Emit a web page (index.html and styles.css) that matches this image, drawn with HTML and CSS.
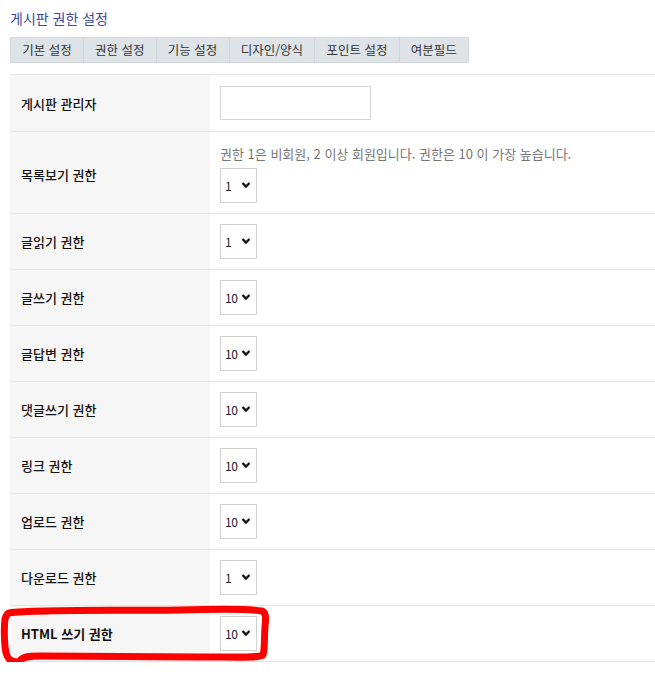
FILE: index.html
```html
<!DOCTYPE html>
<html lang="ko">
<head>
  <meta charset="UTF-8" />
  <meta name="viewport" content="width=device-width, initial-scale=1.0"/>
  <title>게시판 권한 설정</title>
  <link rel="stylesheet" href="styles.css">
</head>
<body>
  <div class="page">
    <h2 class="title">게시판 권한 설정</h2>

    <ul class="tabs">
      <li>기본 설정</li>
      <li>권한 설정</li>
      <li>기능 설정</li>
      <li>디자인/양식</li>
      <li>포인트 설정</li>
      <li>여분필드</li>
    </ul>

    <table class="frm-table">
      <tr class="row-short">
        <th>게시판 관리자</th>
        <td><input type="text" class="frm-input"></td>
      </tr>
      <tr class="row-help">
        <th>목록보기 권한</th>
        <td>
          <p class="help">권한 1은 비회원, 2 이상 회원입니다. 권한은 10 이 가장 높습니다.</p>
          <span class="sel"><select><option>1</option></select><svg viewBox="0 0 10 8"><path d="M1.5 2 L5 5.5 L8.5 2"/></svg></span>
        </td>
      </tr>
      <tr>
        <th>글읽기 권한</th>
        <td><span class="sel"><select><option>1</option></select><svg viewBox="0 0 10 8"><path d="M1.5 2 L5 5.5 L8.5 2"/></svg></span></td>
      </tr>
      <tr>
        <th>글쓰기 권한</th>
        <td><span class="sel"><select><option>10</option></select><svg viewBox="0 0 10 8"><path d="M1.5 2 L5 5.5 L8.5 2"/></svg></span></td>
      </tr>
      <tr>
        <th>글답변 권한</th>
        <td><span class="sel"><select><option>10</option></select><svg viewBox="0 0 10 8"><path d="M1.5 2 L5 5.5 L8.5 2"/></svg></span></td>
      </tr>
      <tr>
        <th>댓글쓰기 권한</th>
        <td><span class="sel"><select><option>10</option></select><svg viewBox="0 0 10 8"><path d="M1.5 2 L5 5.5 L8.5 2"/></svg></span></td>
      </tr>
      <tr>
        <th>링크 권한</th>
        <td><span class="sel"><select><option>10</option></select><svg viewBox="0 0 10 8"><path d="M1.5 2 L5 5.5 L8.5 2"/></svg></span></td>
      </tr>
      <tr>
        <th>업로드 권한</th>
        <td><span class="sel"><select><option>10</option></select><svg viewBox="0 0 10 8"><path d="M1.5 2 L5 5.5 L8.5 2"/></svg></span></td>
      </tr>
      <tr>
        <th>다운로드 권한</th>
        <td><span class="sel"><select><option>1</option></select><svg viewBox="0 0 10 8"><path d="M1.5 2 L5 5.5 L8.5 2"/></svg></span></td>
      </tr>
      <tr>
        <th class="strong">HTML 쓰기 권한</th>
        <td><span class="sel"><select><option>10</option></select><svg viewBox="0 0 10 8"><path d="M1.5 2 L5 5.5 L8.5 2"/></svg></span></td>
      </tr>
    </table>

    <!-- red marker drawn over the last row -->
    <svg class="marker" viewBox="0 0 272 62">
      <path d="M9 10 C40 6 120 8 180 7 C220 6 250 6 262 8 C266 10 266 14 265 24 C264 36 265 46 263 52 C258 55 240 54 200 54 C150 54 90 53 40 53 C28 53 22 54 20 58 C14 60 8 58 6 50 C4 40 4 24 5 16 C6 12 7 11 9 10 Z"/>
    </svg>
  </div>
</body>
</html>
```

FILE: styles.css
```css
body {
  margin: 0;
  font-family: "Noto Sans CJK KR", "Noto Sans", sans-serif;
  font-size: 13px;
  color: #222;
  background: #fff;
}

.page {
  position: relative;
  padding: 7px 0 0 10px;
}

.title {
  margin: 0 0 8px;
  font-size: 14px;
  font-weight: normal;
  color: #3b4a9c;
  line-height: 22px;
}

.tabs {
  display: flex;
  margin: 0;
  padding: 0;
  list-style: none;
  width: 459px;
  background: #dee3e8;
  border: 1px solid #d3d9de;
  box-sizing: border-box;
}

.tabs li {
  flex: 1 1 auto;
  text-align: center;
  line-height: 24px;
  padding: 0 6px;
  color: #333;
  border-left: 1px solid #cfd5da;
  font-size: 12.5px;
}

.tabs li:first-child {
  border-left: none;
}

.frm-table {
  width: 645px;
  margin-top: 11px;
  border-collapse: collapse;
  border-top: 1px solid #e3e3e3;
}

.frm-table th,
.frm-table td {
  border-bottom: 1px solid #e3e3e3;
  height: 35px;
  padding: 10px;
  vertical-align: middle;
}

.frm-table th {
  width: 179px;
  padding-left: 11px;
  background: #f6f6f6;
  text-align: left;
  font-weight: 500;
  color: #111;
}

.frm-table th.strong {
  font-weight: bold;
}

.frm-table .row-short th,
.frm-table .row-short td {
  height: 34px;
  padding-top: 11px;
  padding-bottom: 11px;
}

.frm-table .row-help th,
.frm-table .row-help td {
  height: 58px;
  padding-top: 13px;
  padding-bottom: 10px;
}

.help {
  margin: 0 0 5px;
  color: #777;
  font-size: 13px;
  line-height: 18px;
}

.frm-input {
  display: block;
  width: 151px;
  height: 34px;
  box-sizing: border-box;
  border: 1px solid #d5d5d5;
  margin: 0;
}

.sel {
  position: relative;
  display: block;
  width: 37px;
}

.sel select {
  appearance: none;
  -webkit-appearance: none;
  display: block;
  width: 37px;
  height: 35px;
  margin: 0;
  padding: 0 0 0 4px;
  border: 1px solid #d0d0d0;
  background: #fff;
  font-family: "Noto Sans CJK KR", "Noto Sans", sans-serif;
  font-size: 12px;
  letter-spacing: -0.5px;
  color: #222;
}

.sel svg {
  position: absolute;
  right: 6px;
  top: 13px;
  width: 10px;
  height: 8px;
  fill: none;
  stroke: #111;
  stroke-width: 2.4;
}

.marker {
  position: absolute;
  left: 0;
  top: 603px;
  width: 272px;
  height: 62px;
  fill: none;
  stroke: #ff0000;
  stroke-width: 7;
  stroke-linejoin: round;
}
```
